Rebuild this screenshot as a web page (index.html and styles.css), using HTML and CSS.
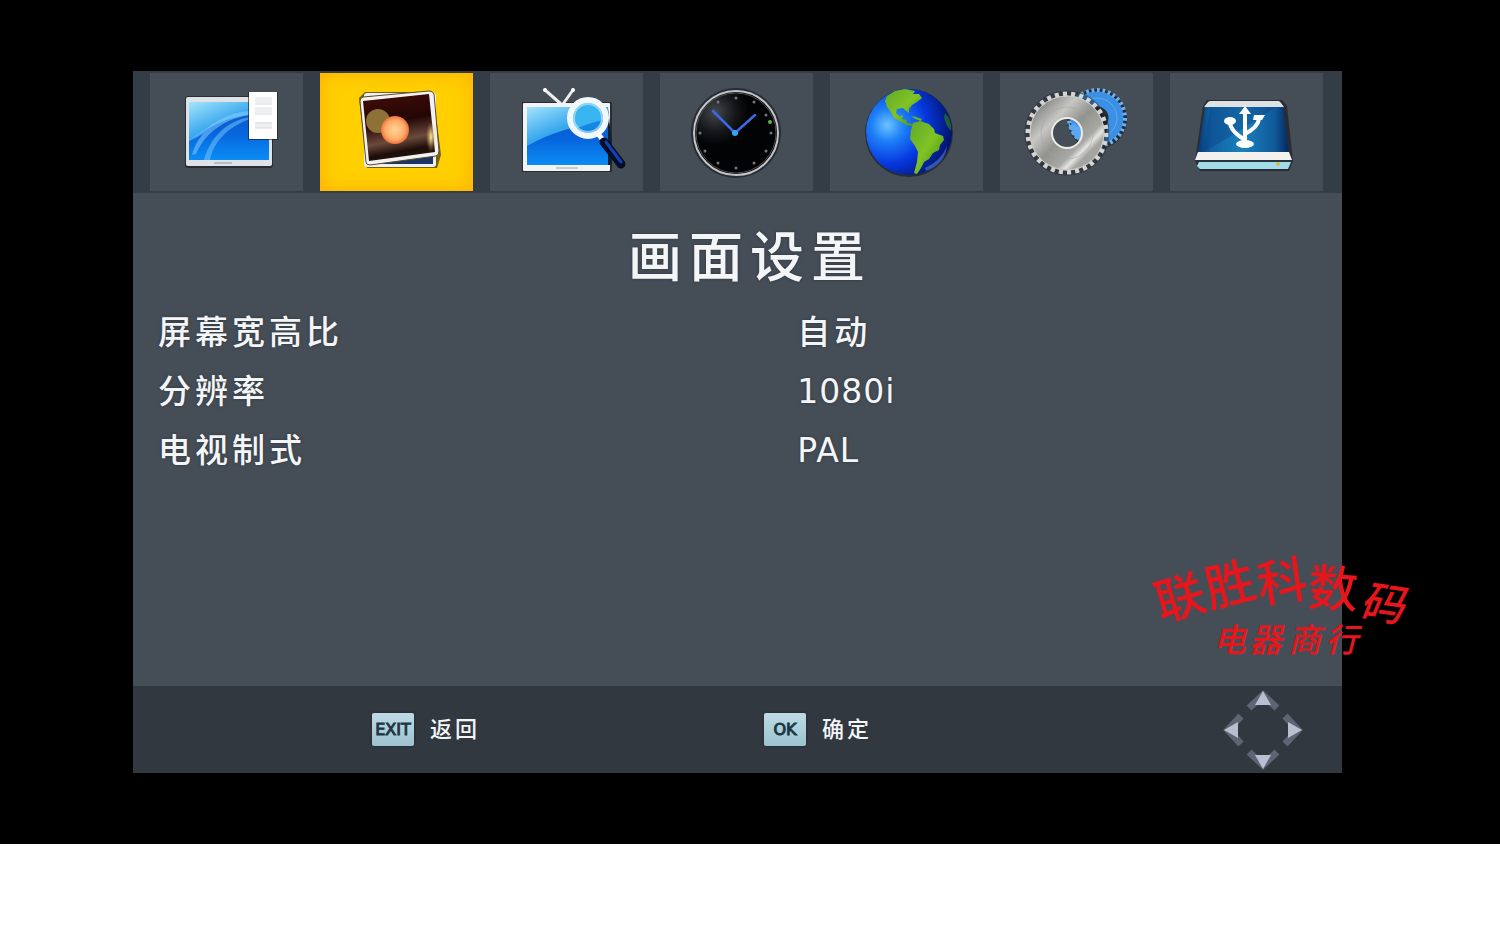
FILE: index.html
```html
<!DOCTYPE html>
<html lang="zh-CN">
<head>
    <meta charset="UTF-8">
    <meta name="viewport" content="width=device-width, initial-scale=1.0">
    <title>画面设置</title>
    <link rel="stylesheet" href="styles.css">
</head>
<body>
    <main class="screen">
        <div class="panel">
            <nav class="tabs">
                <button class="tab" aria-label="节目">
                    <svg viewBox="0 0 153 118" aria-hidden="true">
                        <defs>
                            <linearGradient id="sky" x1="0" y1="0" x2="0.6" y2="1">
                                <stop offset="0" stop-color="#a4e4fb"/>
                                <stop offset="0.45" stop-color="#3aa8ee"/>
                                <stop offset="1" stop-color="#0a63d8"/>
                            </linearGradient>
                            <linearGradient id="sea" x1="0" y1="0" x2="0" y2="1">
                                <stop offset="0" stop-color="#0a5cc8"/>
                                <stop offset="0.4" stop-color="#0664dc"/>
                                <stop offset="1" stop-color="#0b8cf4"/>
                            </linearGradient>
                        </defs>
                        <rect class="shade" x="35" y="23" width="88" height="72" rx="3"/>
                        <rect x="36" y="24" width="86" height="69" rx="2" fill="#dfe3e7"/>
                        <rect x="39" y="29" width="80" height="58" fill="url(#sky)"/>
                        <path d="M39 66C55 60 66 46 99 42L119 40V87H39Z" fill="url(#sea)"/>
                        <path d="M39 66C58 57 70 40 100 38V42C74 46 55 60 46 81L42 82Q45 70 53 61Q46 65 39 68Z" fill="#8fd3ff" opacity="0.5"/>
                        <path d="M54 87C60 65 76 48 100 44V46C78 54 64 68 60 87Z" fill="#7cc8ff" opacity="0.5"/>
                        <rect x="64" y="89" width="18" height="2" fill="#b7bdc4"/>
                        <rect class="shade" x="98" y="19" width="30" height="48"/>
                        <rect x="99" y="19" width="28" height="47" fill="#fff"/>
                        <path d="M105 27h17M105 37h17M105 52h17" stroke="#eeeff0" stroke-width="6"/>
                        <path d="M105 31h17M105 41h17M105 50h17M105 55h17" stroke="#d8dadd"/>
                    </svg>
                </button>
                <button class="tab active" aria-label="画面" aria-current="page">
                    <svg viewBox="0 0 153 118" aria-hidden="true">
                        <defs>
                            <linearGradient id="photo" x1="0.4" y1="0" x2="0.6" y2="1">
                                <stop offset="0" stop-color="#3d0c08"/>
                                <stop offset="0.4" stop-color="#240604"/>
                                <stop offset="0.68" stop-color="#6b4a3c"/>
                                <stop offset="0.85" stop-color="#1d0d09"/>
                                <stop offset="1" stop-color="#2b1510"/>
                            </linearGradient>
                            <radialGradient id="glow">
                                <stop offset="0" stop-color="#ffd596"/>
                                <stop offset="0.7" stop-color="#ffab67"/>
                                <stop offset="1" stop-color="#f0713a"/>
                            </radialGradient>
                            <radialGradient id="flare">
                                <stop offset="0" stop-color="#fff0a0"/>
                                <stop offset="1" stop-color="#c89a50" stop-opacity="0"/>
                            </radialGradient>
                        </defs>
                        <path class="shade" d="M45 19H113L121 82L117 95H47L39 25Z"/>
                        <rect x="44" y="20" width="72" height="74" rx="3" fill="#eef0f3"/>
                        <path d="M47 23H113V91H47Z" fill="#1e3563"/>
                        <path d="M43 24L109 18Q113 18 114 21L119 78Q119 82 116 83L50 92Q46 92 46 89L40 28Q40 25 43 24Z" fill="#f4f2f0" stroke="#5c4a30"/>
                        <path d="M43 28L109 21L115 79L49 88Z" fill="url(#photo)"/>
                        <ellipse cx="111" cy="64" rx="5" ry="15" fill="url(#flare)"/>
                        <circle cx="58" cy="48" r="12" fill="#8d7136"/>
                        <circle cx="75" cy="57" r="14" fill="url(#glow)"/>
                    </svg>
                </button>
                <button class="tab" aria-label="搜索">
                    <svg viewBox="0 0 153 118" aria-hidden="true">
                        <path class="shade" d="M32 29H122V99H32Z"/>
                        <path d="M55 17L71 31M83 17L73 31" stroke="#eceef0" stroke-width="3" stroke-linecap="round"/>
                        <circle cx="55" cy="17" r="2" fill="#fff"/>
                        <circle cx="83" cy="17" r="2" fill="#fff"/>
                        <rect x="33" y="30" width="87" height="68" rx="1" fill="#f1f3f5"/>
                        <rect x="37" y="34" width="81" height="58" fill="url(#sky)"/>
                        <path d="M37 73Q70 54 118 48V92H37Z" fill="url(#sea)"/>
                        <rect x="66" y="94" width="22" height="2" fill="#c8cdd2"/>
                        <path d="M118 35L122 72V92H118Z" fill="#12202e"/>
                        <circle cx="98" cy="45" r="18" fill="#38b4f0"/>
                        <path d="M84 57Q97 50 114 47A17 17 0 0 1 84 57Z" fill="#1487e4"/>
                        <circle cx="98" cy="45" r="18" fill="none" stroke="#f2f7fa" stroke-width="6"/>
                        <circle cx="98" cy="45" r="14" fill="none" stroke="#b6e6fa" stroke-width="2" opacity="0.7"/>
                        <path d="M109 62L113 67" stroke="#fff" stroke-width="5" stroke-linecap="round"/>
                        <path d="M114 69L131 91" stroke="#060e26" stroke-width="9" stroke-linecap="round"/>
                        <path d="M116 69L131 89" stroke="#1240b8" stroke-width="3" stroke-linecap="round"/>
                    </svg>
                </button>
                <button class="tab" aria-label="时间">
                    <svg viewBox="0 0 153 118" aria-hidden="true">
                        <defs>
                            <radialGradient id="dial" cx="0.25" cy="0.25" r="0.4">
                                <stop offset="0" stop-color="#44484c"/>
                                <stop offset="0.6" stop-color="#15171a"/>
                                <stop offset="1" stop-color="#020304"/>
                            </radialGradient>
                        </defs>
                        <circle class="shade" cx="76" cy="60" r="45"/>
                        <circle cx="76" cy="60" r="42" fill="url(#dial)" stroke="#c4c4c6" stroke-width="2"/>
                        <circle cx="76" cy="60" r="40" fill="none" stroke="#4d4f52"/>
                        <g fill="#73777a">
                            <circle cx="76" cy="25" r="1.5"/><circle cx="94" cy="29" r="1.5"/>
                            <circle cx="106" cy="42" r="1.5"/><circle cx="111" cy="60" r="1.5"/>
                            <circle cx="106" cy="78" r="1.5"/><circle cx="94" cy="90" r="1.5"/>
                            <circle cx="76" cy="95" r="1.5"/><circle cx="58" cy="90" r="1.5"/>
                            <circle cx="45" cy="78" r="1.5"/><circle cx="40" cy="60" r="1.5"/>
                            <circle cx="58" cy="29" r="1.5"/>
                        </g>
                        <circle cx="110" cy="49" r="2" fill="#63b83c"/>
                        <path d="M53 38L75 60L95 42" fill="none" stroke="#3a68e8" stroke-width="2.5" stroke-linecap="round"/>
                        <circle cx="75" cy="60" r="3" fill="#31a8f8"/>
                    </svg>
                </button>
                <button class="tab" aria-label="语言">
                    <svg viewBox="0 0 153 118" aria-hidden="true">
                        <defs>
                            <radialGradient id="ocean" cx="0.25" cy="0.42" r="0.75">
                                <stop offset="0" stop-color="#6cc4ff"/>
                                <stop offset="0.25" stop-color="#1e80f8"/>
                                <stop offset="0.6" stop-color="#0638e0"/>
                                <stop offset="1" stop-color="#03146c"/>
                            </radialGradient>
                            <linearGradient id="land" x1="0" y1="0" x2="1" y2="1">
                                <stop offset="0" stop-color="#5fa82c"/>
                                <stop offset="0.5" stop-color="#80c424"/>
                                <stop offset="1" stop-color="#3c8414"/>
                            </linearGradient>
                        </defs>
                        <circle class="shade" cx="79" cy="60" r="44"/>
                        <circle cx="79" cy="59" r="43" fill="url(#ocean)"/>
                        <path d="M57 23L65 18L75 16L85 18L83 21L89 21L92 25L87 29L82 32L79 36L79 40L76 38L73 35L67 36L66 40L69 43L73 42L72 46L76 47L77 50L83 51L82 53L76 52L70 48L64 45L61 39L57 34L55 28Z" fill="url(#land)"/>
                        <path d="M81 43L86 44L92 46L91 48L85 46Z" fill="#6ab02c"/>
                        <path d="M83 50L90 48L99 51L104 56L105 60L113 63L114 67L110 72L109 77L103 80L99 86L94 89L91 95L87 101L84 100L87 89L88 79L85 73L80 66L81 57Z" fill="url(#land)"/>
                        <path d="M115 40L119 45L121 52V58L117 53L114 45Z" fill="#1f5c3c"/>
                        <path d="M95 95Q111 88 117 73Q115 91 96 98Z" fill="#5b96ea" opacity="0.5"/>
                    </svg>
                </button>
                <button class="tab" aria-label="系统">
                    <svg viewBox="0 0 153 118" aria-hidden="true">
                        <defs>
                            <linearGradient id="steel" x1="0" y1="0" x2="1" y2="1">
                                <stop offset="0" stop-color="#8d8e8b"/>
                                <stop offset="0.25" stop-color="#c6c6c2"/>
                                <stop offset="0.5" stop-color="#92938f"/>
                                <stop offset="0.74" stop-color="#a8a9a5"/>
                                <stop offset="0.82" stop-color="#e4e4e0"/>
                                <stop offset="0.9" stop-color="#a4a5a1"/>
                            </linearGradient>
                        </defs>
                        <circle class="shade" cx="97" cy="46" r="30"/>
                        <circle cx="97" cy="45" r="19" fill="none" stroke="#3b8fe4" stroke-width="15"/>
                        <circle cx="97" cy="45" r="28" fill="none" stroke="#6cb2f0" stroke-width="4" pathLength="64" stroke-dasharray="1 1"/>
                        <circle cx="97" cy="45" r="20" fill="none" stroke="#62aaf0"/>
                        <path d="M88 31Q104 35 108 54L104 66L98 44Z" fill="#17202a"/>
                        <circle cx="67" cy="60" r="40" fill="none" stroke="#1f252c" stroke-width="5" opacity="0.5"/>
                        <path d="M68 49L71 52L74 50L81 56V66L77 67L75 63L72 62L73 58L70 57Z" fill="#5aa9f0"/>
                        <circle cx="67" cy="60" r="26" fill="none" stroke="url(#steel)" stroke-width="23"/>
                        <circle cx="67" cy="60" r="39" fill="none" stroke="#d4d4d0" stroke-width="5" pathLength="60" stroke-dasharray="1 1"/>
                        <circle cx="67" cy="60" r="37" fill="none" stroke="#c9c9c5"/>
                        <circle cx="67" cy="60" r="15" fill="none" stroke="#ecece8" stroke-width="2"/>
                        <circle cx="67" cy="60" r="26" fill="none" stroke="#a4a5a1" opacity="0.5"/>
                    </svg>
                </button>
                <button class="tab" aria-label="USB">
                    <svg viewBox="0 0 153 118" aria-hidden="true">
                        <defs>
                            <linearGradient id="drive" x1="0" y1="0" x2="1" y2="0">
                                <stop offset="0" stop-color="#073a78"/>
                                <stop offset="0.15" stop-color="#1263a4"/>
                                <stop offset="0.5" stop-color="#1a80bc"/>
                                <stop offset="0.85" stop-color="#0f5898"/>
                                <stop offset="1" stop-color="#06265c"/>
                            </linearGradient>
                        </defs>
                        <path class="shade" d="M37 27H112L117 33L123 88L119 98H30L25 88L33 33Z"/>
                        <path d="M38 29Q39 28 41 28H108Q110 28 111 30L114 34H34Z" fill="#dfe2e4"/>
                        <path d="M35 34H113L119 80H28Z" fill="url(#drive)"/>
                        <path d="M40 34H106L66 60L34 79Z" fill="#0a4484" opacity="0.4"/>
                        <path d="M28 79H119L122 87H25Z" fill="#f2f1ee"/>
                        <path d="M25 87H122L121 90H27Z" fill="#28323a"/>
                        <path d="M29 89H121L118 96H30L27 93Z" fill="#a5dcea"/>
                        <circle cx="108" cy="91" r="2" fill="#d8b84c"/>
                        <path d="M75 38V70M60 49Q60 58 75 67M89 46Q88 54 75 61" fill="none" stroke="#fff" stroke-width="4"/>
                        <path d="M69 41L75 33L81 41Z" fill="#fff"/>
                        <ellipse cx="60" cy="48" rx="6" ry="4" fill="#fff"/>
                        <path d="M84 42H95L92 47H83Z" fill="#fff"/>
                        <ellipse cx="75" cy="71" rx="9" ry="4" fill="#fff"/>
                    </svg>
                </button>
            </nav>

            <section class="settings">
                <h1>画面设置</h1>
                <dl class="options">
                    <dt>屏幕宽高比</dt>
                    <dd>自动</dd>
                    <dt>分辨率</dt>
                    <dd class="latin">1080i</dd>
                    <dt>电视制式</dt>
                    <dd class="latin">PAL</dd>
                </dl>
            </section>

            <footer class="hints">
                <button class="hint"><span class="key">EXIT</span>返回</button>
                <button class="hint"><span class="key">OK</span>确定</button>
                <svg class="pad" viewBox="0 0 80 80" aria-hidden="true">
                    <defs>
                        <g id="arrow">
                            <path d="M26 18L40 5L54 18" fill="none" stroke="#5e6473" stroke-width="7"/>
                            <path d="M40 1L48 15H32Z" fill="#b9bfd0"/>
                        </g>
                    </defs>
                    <use href="#arrow"/>
                    <use href="#arrow" transform="rotate(90 40 40)"/>
                    <use href="#arrow" transform="rotate(180 40 40)"/>
                    <use href="#arrow" transform="rotate(270 40 40)"/>
                </svg>
            </footer>
        </div>

        <!-- shop stamp -->
        <svg class="stamp" viewBox="0 0 300 180">
            <g class="stamp-name">
                <text transform="translate(31 102) rotate(-16)">联</text>
                <text transform="translate(80 88) rotate(-14)">胜</text>
                <text transform="translate(130 83) rotate(-8)">科</text>
                <text transform="translate(177 85) rotate(4)">数</text>
                <text class="small" transform="translate(228 96) rotate(8)">码</text>
            </g>
            <g class="stamp-shop">
                <text x="83" y="132">电</text>
                <text x="119" y="132">器</text>
                <text x="158" y="132">商</text>
                <text x="195" y="132">行</text>
            </g>
        </svg>
    </main>
</body>
</html>
```
FILE: styles.css
```css
* {
    box-sizing: border-box;
}
body {
    margin: 0;
    background-color: #fff;
    color: #f4f5f6;
    font-family: "DejaVu Sans", "Noto Sans CJK SC", sans-serif;
    font-weight: 500;
}
button {
    border: none;
    padding: 0;
    background: none;
    color: inherit;
    font-family: inherit;
    font-weight: inherit;
    cursor: pointer;
}
.screen {
    position: relative;
    padding: 71px 158px 71px 133px;
    background-color: #000;
}
.panel {
    background-color: #454d57;
}

/* top icon bar */
.tabs {
    display: grid;
    grid-template-columns: repeat(7, 1fr);
    gap: 17px;
    padding: 2px 19px 2px 17px;
    background-color: #343d46;
}
.tab {
    background-color: #454d57;
}
.tab svg {
    display: block;
    width: 100%;
}
.tab.active {
    background-color: #ffcf00;
    box-shadow: inset 0 0 18px #ffac08;
}
.shade {
    fill: #15191e;
    opacity: 0.6;
}

/* settings list */
.settings {
    min-height: 493px;
    padding: 26px 0 0 25px;
}
h1 {
    margin: 0;
    font-size: 54px;
    font-weight: 500;
    line-height: 80px;
    letter-spacing: 7px;
    text-align: center;
}
.options {
    display: grid;
    grid-template-columns: 54% 1fr;
    margin: 4px 0 0;
    font-size: 33px;
    line-height: 59px;
    letter-spacing: 4px;
}
.options dd {
    margin: 0;
}
.options .latin {
    letter-spacing: 1px;
}
h1, .options {
    text-shadow: 0 0 3px #2c343c;
}

/* key hints */
.hints {
    display: grid;
    grid-template-columns: 8fr 8fr 3fr;
    align-items: center;
    min-height: 87px;
    padding: 0 39px 0 239px;
    background-color: #31383f;
}
.hint {
    display: flex;
    align-items: center;
    justify-self: start;
    gap: 16px;
    font-size: 22px;
    line-height: 34px;
    letter-spacing: 3px;
}
.key {
    width: 42px;
    height: 33px;
    border-radius: 2px;
    background: linear-gradient(#bddbe6, #9cc3cf);
    box-shadow: 0 0 3px #22222e;
    color: #1d3644;
    font-size: 16px;
    letter-spacing: 0;
    -webkit-text-stroke: 1px #1d3644;
}
.pad {
    justify-self: end;
    width: 80px;
    height: 80px;
}

.stamp {
    position: absolute;
    top: 520px;
    right: 70px;
    width: 300px;
    height: 180px;
    overflow: visible;
    fill: #e6161d;
    font-family: "Noto Sans CJK SC", sans-serif;
    pointer-events: none;
}
.stamp-name {
    font-size: 50px;
}
.stamp-name .small {
    font-size: 44px;
    font-style: italic;
}
.stamp-shop {
    font-size: 33px;
    font-style: italic;
}
```
